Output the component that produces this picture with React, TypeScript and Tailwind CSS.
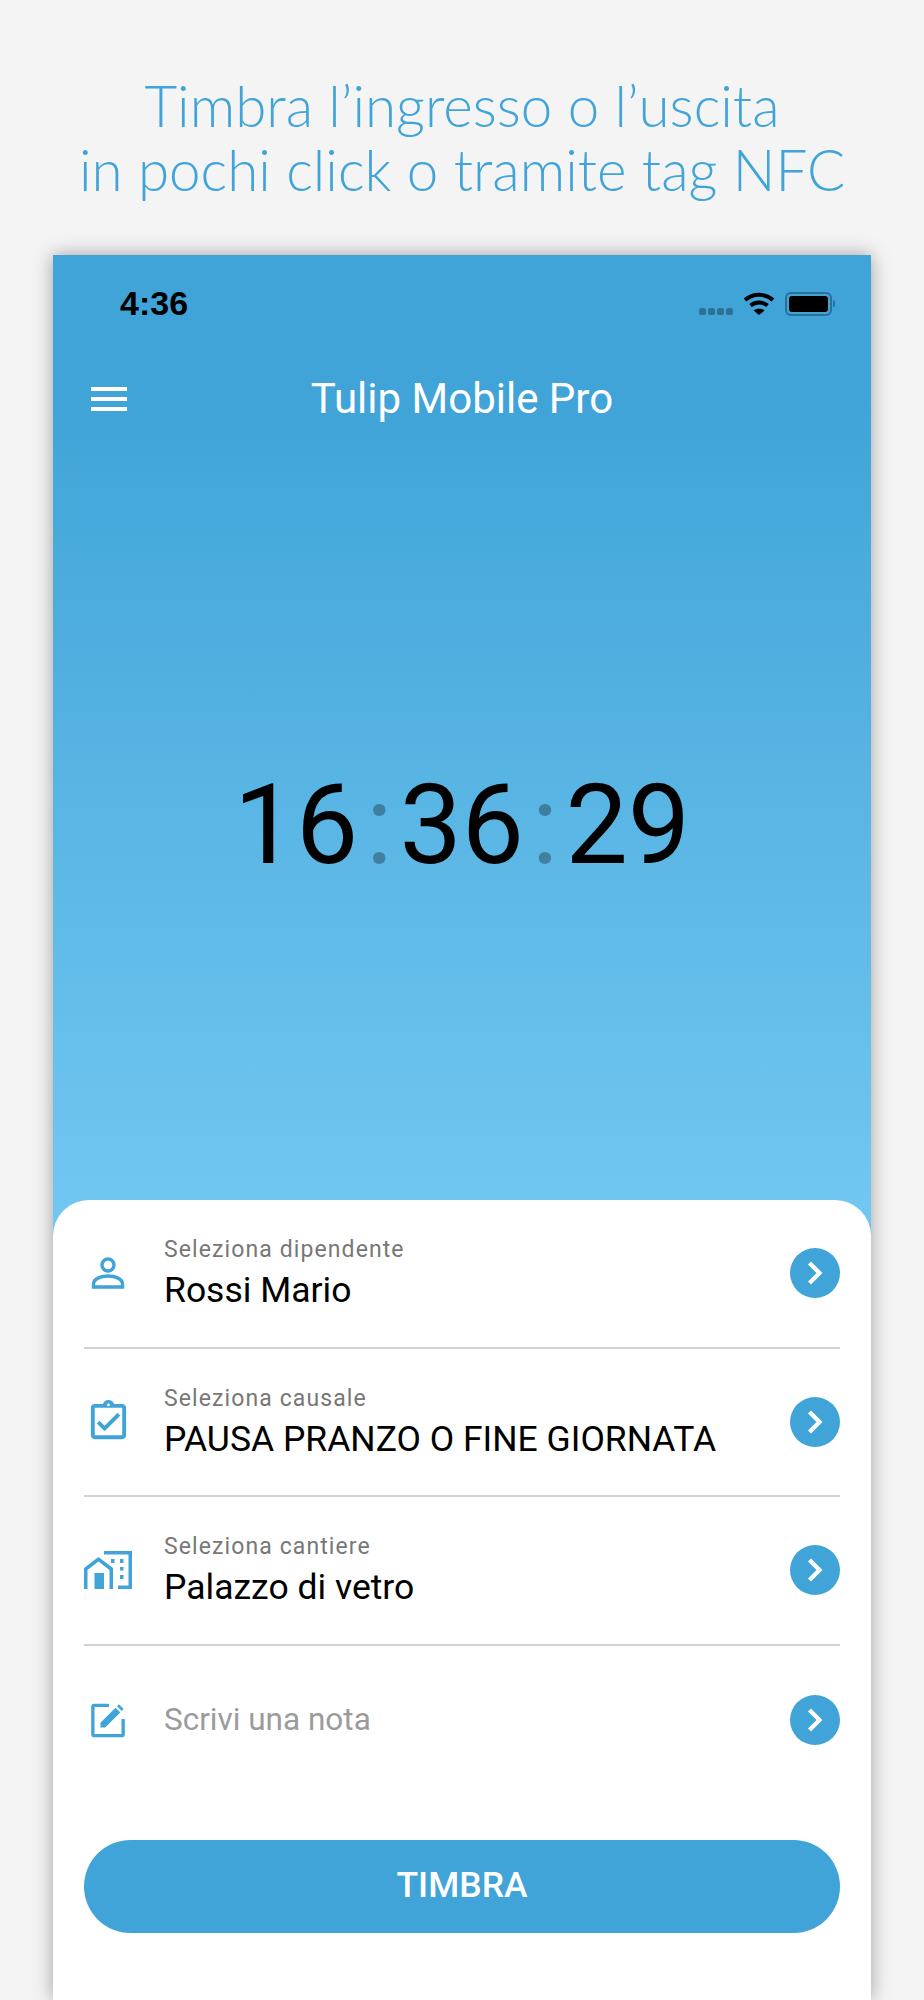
import React from "react";
import { MdOutlineAssignmentTurnedIn } from "react-icons/md";

const PersonIcon = () => (
    <svg width="34" height="34" viewBox="0 0 34 34" fill="none" stroke="#40a4d8" strokeWidth="3.4">
        <circle cx="17" cy="9" r="6" />
        <path d="M2.500 31 v-3 c0-5 7-8 14.500-8 s14.500 3 14.500 8 v3 z" />
    </svg>
);

const HomeWorkIcon = () => (
    <svg width="48" height="38" viewBox="0 0 48 38" fill="#40a4d8">
        <path d="M14.500 6 L29 17 V38 H25.500 V19 L14.500 10.500 L3.500 19 V38 H0 V17 Z" />
        <rect x="10.500" y="22" width="9.500" height="16" />
        <path d="M20 0 H48 V38 H34 V34.500 H44.500 V3.500 H20 Z" />
        <rect x="27" y="8" width="3.500" height="4" />
        <rect x="36" y="8" width="3.500" height="4" />
        <rect x="36" y="16" width="3.500" height="3.500" />
        <rect x="36" y="24" width="3.500" height="4" />
    </svg>
);

const NoteIcon = () => (
    <svg width="36" height="36" viewBox="0 0 38 38" fill="none">
        <path d="M20 3.500 H4.500 a1.500 1.500 0 0 0 -1.500 1.500 V34 a1.500 1.500 0 0 0 1.500 1.500 H33.500 a1.500 1.500 0 0 0 1.500 -1.500 V18" stroke="#40a4d8" strokeWidth="3.500" />
        <path d="M11 27 V22 L27 6 L32 11 L16 27 Z M28.500 4.500 L30.500 2.500 L35.500 7.500 L33.500 9.500 Z" fill="#40a4d8" />
    </svg>
);

const Chevron = () => (
    <div className="w-[50px] h-[50px] rounded-full bg-[#40a4d8] flex items-center justify-center shrink-0">
        <svg width="16" height="24" viewBox="0 0 16 24" fill="none" stroke="white" strokeWidth="4.200">
            <path d="M2.500 2 L12.500 12 L2.500 22" />
        </svg>
    </div>
);

const rows = [
    { label: "Seleziona dipendente", value: "Rossi Mario", icon: <PersonIcon /> },
    { label: "Seleziona causale", value: "PAUSA PRANZO O FINE GIORNATA", icon: <MdOutlineAssignmentTurnedIn size={47} color="#40a4d8" /> },
    { label: "Seleziona cantiere", value: "Palazzo di vetro", icon: <HomeWorkIcon /> },
];

const App: React.FC = () => {
    return (
        <div className="h-[2000px] overflow-hidden bg-[#f4f4f4] font-['Roboto',sans-serif]">
            <h1 className="pt-[73px] h-[255px] text-center text-[56.500px] leading-[64px] font-light text-[#40a4d8] font-['Lato',sans-serif]">
                Timbra l’ingresso o l’uscita
                <br />
                in pochi click o tramite tag NFC
            </h1>

            <div className="mx-[53px] h-[1745px] bg-white shadow-[0_0_18px_rgba(0,0,0,0.35)]">
                <div className="h-[981px] bg-gradient-to-b from-[#40a4d8] from-[15%] to-[#72c8f1] flex flex-col">
                    <div className="h-[97px] px-[67px] flex items-center justify-between pr-[36px]">
                        <span className="font-['Liberation_Sans',sans-serif] font-bold text-[34px] text-black">4:36</span>
                        <div className="flex items-center gap-[10px]">
                            <div className="flex gap-[2px] mt-[15px] opacity-30">
                                <div className="w-[7px] h-[7px] rounded-[2px] bg-black" />
                                <div className="w-[7px] h-[7px] rounded-[2px] bg-black" />
                                <div className="w-[7px] h-[7px] rounded-[2px] bg-black" />
                                <div className="w-[7px] h-[7px] rounded-[2px] bg-black" />
                            </div>
                            <svg width="32" height="24" viewBox="0 0 32 24" fill="none" stroke="black" strokeWidth="4">
                                <path d="M2 8 C10 1 22 1 30 8" />
                                <path d="M7.500 13.500 C12.500 9.500 19.500 9.500 24.500 13.500" />
                                <path d="M16 23 L10.500 18.500 C13.500 16 18.500 16 21.500 18.500 Z" fill="black" stroke="none" />
                            </svg>
                            <div className="flex items-center">
                                <div className="w-[47px] h-[24px] rounded-[6px] border-2 border-[#2a6f96] p-[2px]">
                                    <div className="w-full h-full rounded-[3px] bg-black" />
                                </div>
                                <div className="w-[2px] h-[7px] ml-[1px] rounded-r bg-[#2a6f96]" />
                            </div>
                        </div>
                    </div>

                    <div className="relative h-[93px] flex items-center justify-center">
                        <svg className="absolute left-[38px] top-[35px]" width="36" height="24" viewBox="0 0 36 24" fill="white">
                            <rect x="0" y="0" width="36" height="4" />
                            <rect x="0" y="10" width="36" height="4" />
                            <rect x="0" y="20" width="36" height="4" />
                        </svg>
                        <span className="text-white text-[42px]">Tulip Mobile Pro</span>
                    </div>

                    <div className="h-[445px] flex items-end justify-center text-black text-[111px] leading-[130px] tabular-nums">
                        <span>16</span>
                        <span className="w-[41px] text-center text-black/30">:</span>
                        <span>36</span>
                        <span className="w-[41px] text-center text-black/30">:</span>
                        <span>29</span>
                    </div>
                </div>

                <div className="relative -mt-[36px] bg-white rounded-t-[36px] px-[31px]">
                    {rows.map((row) => (
                        <div key={row.label} className="h-[148.500px] flex items-center border-b-2 border-[#d2d2d2]">
                            <div className="w-[48px] flex justify-center shrink-0">{row.icon}</div>
                            <div className="ml-[32px] flex-1 pt-[2px]">
                                <div className="text-[23px] leading-[30px] tracking-[1.100px] text-[#777777]">{row.label}</div>
                                <div className="mt-[2px] text-[35.500px] leading-[46px] text-black">{row.value}</div>
                            </div>
                            <Chevron />
                        </div>
                    ))}
                    <div className="h-[148px] flex items-center">
                        <div className="w-[48px] flex justify-center shrink-0"><NoteIcon /></div>
                        <div className="ml-[32px] flex-1 text-[31.500px] text-[#9b9b9b]">Scrivi una nota</div>
                        <Chevron />
                    </div>
                    <button className="mt-[46px] w-full h-[93px] rounded-full bg-[#40a4d8] text-white text-[35.500px] font-medium">
                        TIMBRA
                    </button>
                </div>
            </div>
        </div>
    );
};

export default App;
